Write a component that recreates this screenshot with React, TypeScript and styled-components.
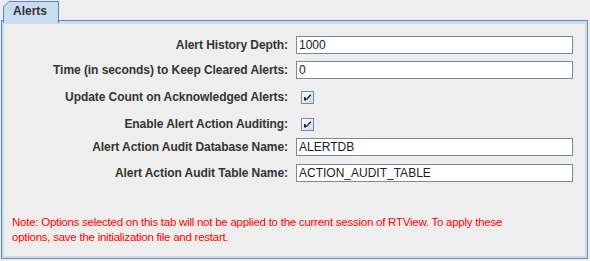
import React from "react";
import styled, { createGlobalStyle } from "styled-components";

const GlobalStyle = createGlobalStyle`
	html, body {
		margin: 0;
		padding: 0;
		background: #eeeeee;
	}
	body {
		font-family: "Liberation Sans", Arial, sans-serif;
		font-size: 12px;
		color: #333333;
	}
`;

const Window = styled.div`
	width: 590px;
	height: 261px;
	box-sizing: border-box;
	background: #eeeeee;
	padding-top: 1px;
`;

const TabStrip = styled.div`
	display: flex;
	height: 19px;
	padding-left: 3px;
`;

const Tab = styled.div`
	position: relative;
	width: 56px;
	height: 19px;
`;

const TabShape = styled.svg`
	position: absolute;
	left: 0;
	top: 0;
	z-index: 1;
`;

const TabLabel = styled.span`
	position: relative;
	z-index: 2;
	display: block;
	padding: 3px 0 0 10px;
	font-weight: bold;
	font-size: 12px;
	line-height: 14px;
	color: #333333;
`;

const Panel = styled.div`
	margin-left: 1px;
	width: 587px;
	height: 239px;
	box-sizing: border-box;
	border: 1px solid #6382bf;
	border-right-color: #7a8aa6;
	border-bottom-color: #7a8aa6;
	box-shadow: inset 0 3px 0 #c8ddf2, inset 0 0 0 2px #c8ddf2;
	padding: 3px 2px 2px 2px;
	display: flex;
	flex-direction: column;
`;

const Row = styled.div<{ $top: number }>`
	display: flex;
	align-items: center;
	height: 18px;
	margin-top: ${(p) => p.$top}px;
`;

const Label = styled.label`
	width: 284px;
	text-align: right;
	font-weight: bold;
	letter-spacing: -0.06px;
	white-space: nowrap;
	color: #333333;
`;

const Field = styled.div`
	margin-left: 8px;
	width: 277px;
	height: 18px;
	box-sizing: border-box;
	border: 1px solid #7a8a99;
	background: #ffffff;
	padding-left: 2px;
	line-height: 16px;
	color: #222222;
	white-space: nowrap;
	overflow: hidden;
`;

const CheckWrap = styled.div`
	margin-left: 13px;
	width: 13px;
	height: 13px;
	display: flex;
`;

const Note = styled.p`
	margin: 33px 0 0 8px;
	color: #ff0000;
	line-height: 15px;
	font-size: 11.5px;
	letter-spacing: -0.25px;
	white-space: nowrap;
`;

const CheckBox = () => (
	<CheckWrap>
		<svg width="13" height="13" viewBox="0 0 13 13">
			<defs>
				<linearGradient id="cbg" x1="0" y1="0" x2="1" y2="1">
					<stop offset="0" stopColor="#ffffff" />
					<stop offset="1" stopColor="#c8d7e8" />
				</linearGradient>
			</defs>
			<rect x="0.5" y="0.5" width="12" height="12" fill="url(#cbg)" stroke="#7a8aa6" />
			<path d="M3.5 6 V9.5 M4.5 6.5 V9.5 M5 8.5 L9.5 3.5 M5.5 9 L10 4" stroke="#222" strokeWidth="1" fill="none" />
		</svg>
	</CheckWrap>
);

const rows: { label: string; value?: string; check?: boolean; top: number }[] = [
	{ label: "Alert History Depth:", value: "1000", top: 12 },
	{ label: "Time (in seconds) to Keep Cleared Alerts:", value: "0", top: 7 },
	{ label: "Update Count on Acknowledged Alerts:", check: true, top: 9 },
	{ label: "Enable Alert Action Auditing:", check: true, top: 9 },
	{ label: "Alert Action Audit Database Name:", value: "ALERTDB", top: 5 },
	{ label: "Alert Action Audit Table Name:", value: "ACTION_AUDIT_TABLE", top: 8 },
];

const App = () => {
	return (
		<Window>
			<GlobalStyle />
			<TabStrip>
				<Tab>
					<TabShape width="56" height="22" viewBox="0 0 56 22">
						<path d="M0.5 22 V6 L6 0.5 H55.5 V22" fill="#c8ddf2" stroke="#6382bf" />
					</TabShape>
					<TabLabel>Alerts</TabLabel>
				</Tab>
			</TabStrip>
			<Panel>
				{rows.map((r) => (
					<Row key={r.label} $top={r.top}>
						<Label>{r.label}</Label>
						{r.check ? <CheckBox /> : <Field>{r.value}</Field>}
					</Row>
				))}
				<Note>
					Note: Options selected on this tab will not be applied to the current session of RTView. To apply these
					<br />
					options, save the initialization file and restart.
				</Note>
			</Panel>
		</Window>
	);
};

export default App;
